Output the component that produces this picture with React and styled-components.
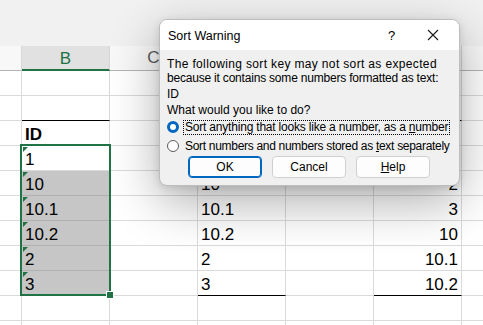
import styled, { createGlobalStyle, css } from 'styled-components';

const Global = createGlobalStyle`
    html, body {
        margin: 0;
        padding: 0;
        background: #ffffff;
        overflow: hidden;
    }
`;

const Sheet = styled.div`
    position: relative;
    width: 483px;
    height: 325px;
    overflow: hidden;
    font-family: 'Liberation Sans', Arial, sans-serif;
    background: #ffffff;
`;

const TopArea = styled.div`
    height: 46px;
    background: #f1f1f1;
`;

const Row = styled.div`
    display: grid;
    grid-template-columns: 22px repeat(6, 88px);
    height: 25px;
`;

// 열 머리글
const HeadCell = styled.div`
    box-sizing: border-box;
    height: 25px;
    display: flex;
    align-items: center;
    justify-content: center;
    font-size: 17px;
    color: #5b5b5b;
    background: #f8f8f8;
    border-right: 1px solid #d6d6d6;
    border-bottom: 1px solid #b4b4b4;
    ${(props) =>
        props.$active &&
        css`
            background: #e1e1e1;
            color: #217346;
            border-bottom: 2px solid #217346;
            padding-top: 2px;
        `}
`;

const Cell = styled.div`
    position: relative;
    box-sizing: border-box;
    height: 25px;
    display: flex;
    align-items: flex-end;
    justify-content: ${(props) => (props.$right ? 'flex-end' : 'flex-start')};
    padding: 0 3px 2px 3px;
    font-size: 17px;
    line-height: 17px;
    color: #000000;
    font-weight: ${(props) => (props.$bold ? 700 : 400)};
    background: ${(props) => (props.$shade ? '#c6c6c6' : '#ffffff')};
    border-right: 1px solid ${(props) => (props.$shade ? '#b8b8b8' : '#dadada')};
    border-bottom: 1px solid ${(props) => (props.$shade ? '#b0b0b0' : '#dadada')};
    ${(props) =>
        props.$line &&
        css`
            border-bottom: 1px solid #000000;
        `}
    ${(props) =>
        props.$flag &&
        css`
            &::before {
                content: '';
                position: absolute;
                top: 1px;
                left: 1px;
                border-top: 5px solid #217346;
                border-right: 5px solid transparent;
            }
        `}
`;

const Selection = styled.div`
    position: absolute;
    left: 20px;
    top: 144px;
    width: 91px;
    height: 152px;
    box-sizing: border-box;
    border: 2px solid #217346;
    pointer-events: none;
`;

const Handle = styled.div`
    position: absolute;
    right: -5px;
    bottom: -5px;
    width: 6px;
    height: 6px;
    background: #217346;
    border: 1px solid #ffffff;
`;

/* 대화 상자 */
const Dialog = styled.div`
    position: absolute;
    left: 159px;
    top: 19px;
    width: 301px;
    height: 167px;
    box-sizing: border-box;
    border: 1px solid #bdbdbd;
    border-radius: 8px;
    background: #f0f0f0;
    overflow: hidden;
    box-shadow: 0 16px 50px rgba(0, 0, 0, 0.32), 0 2px 8px rgba(0, 0, 0, 0.12);
    font-family: 'Liberation Sans', Arial, sans-serif;
    font-size: 12px;
    color: #000000;
    white-space: nowrap;
`;

const TitleBar = styled.div`
    height: 30px;
    background: #ffffff;
    display: flex;
    align-items: center;
    padding: 0 6px 0 8px;
    font-size: 12.5px;
`;

const Title = styled.div`
    flex: 1;
    padding-top: 1px;
`;

const TitleBtn = styled.div`
    width: 41px;
    display: flex;
    align-items: center;
    justify-content: center;
    font-size: 13px;
`;

const Body = styled.div`
    padding: 7px 0 0 7px;
    line-height: 14px;
`;

const Para = styled.div`
    margin-bottom: ${(props) => props.$mb || 0}px;
    letter-spacing: ${(props) => props.$ls || 0}px;
`;

const Options = styled.div`
    display: flex;
    flex-direction: column;
    gap: 5px;
    margin-top: 3px;
`;

const Option = styled.div`
    display: flex;
    align-items: center;
    gap: 4px;
    height: 14px;
`;

const Radio = styled.span`
    width: 12px;
    height: 12px;
    box-sizing: border-box;
    border-radius: 50%;
    background: #ffffff;
    border: ${(props) => (props.$on ? '3.5px solid #0067c0' : '1px solid #5c5c5c')};
    flex: none;
`;

const Label = styled.span`
    padding: 0 1px;
    line-height: 13px;
    letter-spacing: ${(props) => props.$ls}px;
    border: 1px ${(props) => (props.$focus ? 'dotted #000000' : 'solid transparent')};
`;

const Buttons = styled.div`
    display: flex;
    gap: 10px;
    margin: 3px 0 0 21px;
`;

const Btn = styled.div`
    width: 74px;
    height: 22px;
    box-sizing: border-box;
    display: flex;
    align-items: center;
    justify-content: center;
    background: #fdfdfd;
    border-radius: 4px;
    border: 1px solid ${(props) => (props.$primary ? '#0067c0' : '#d0d0d0')};
    box-shadow: ${(props) => (props.$primary ? 'inset 0 0 0 1px #0067c0' : 'none')};
`;

const columnB = ['', '', 'ID', '1', '10', '10.1', '10.2', '2', '3', '', ''];
const columnD = ['', '', 'ID', '1', '10', '10.1', '10.2', '2', '3', '', ''];
const columnF = ['', '', 'ID', '1', '2', '3', '10', '10.1', '10.2', '', ''];

export default function App() {
    return (
        <Sheet>
            <Global />
            <TopArea />
            <Row>
                <HeadCell />
                <HeadCell $active>B</HeadCell>
                <HeadCell>C</HeadCell>
                <HeadCell>D</HeadCell>
                <HeadCell>E</HeadCell>
                <HeadCell>F</HeadCell>
                <HeadCell />
            </Row>
            {columnB.map((b, i) => {
                const line = i === 1 || i === 8;
                return (
                    <Row key={i}>
                        <Cell />
                        <Cell $bold={i === 2} $shade={i >= 4 && i <= 8} $flag={i >= 3 && i <= 8} $line={line}>
                            {b}
                        </Cell>
                        <Cell />
                        <Cell $bold={i === 2} $line={line}>
                            {columnD[i]}
                        </Cell>
                        <Cell />
                        <Cell $bold={i === 2} $right={i !== 2} $line={line}>
                            {columnF[i]}
                        </Cell>
                        <Cell />
                    </Row>
                );
            })}
            <Selection>
                <Handle />
            </Selection>
            <Dialog>
                <TitleBar>
                    <Title>Sort Warning</Title>
                    <TitleBtn>?</TitleBtn>
                    <TitleBtn>
                        <svg width="12" height="12" viewBox="0 0 12 12">
                            <path d="M1 1 L11 11 M11 1 L1 11" stroke="#1a1a1a" strokeWidth="1.1" />
                        </svg>
                    </TitleBtn>
                </TitleBar>
                <Body>
                    <Para $ls={0.35}>The following sort key may not sort as expected</Para>
                    <Para $mb={2} $ls={-0.2}>
                        because it contains some numbers formatted as text:
                    </Para>
                    <Para $mb={2}>ID</Para>
                    <Para>What would you like to do?</Para>
                    <Options>
                        <Option>
                            <Radio $on />
                            <Label $focus $ls={-0.2}>
                                Sort anything that looks like a number, as a <u>n</u>umber
                            </Label>
                        </Option>
                        <Option>
                            <Radio />
                            <Label $ls={-0.3}>
                                Sort numbers and numbers stored as <u>t</u>ext separately
                            </Label>
                        </Option>
                    </Options>
                    <Buttons>
                        <Btn $primary>OK</Btn>
                        <Btn>Cancel</Btn>
                        <Btn>
                            <span>
                                <u>H</u>elp
                            </span>
                        </Btn>
                    </Buttons>
                </Body>
            </Dialog>
        </Sheet>
    );
}
